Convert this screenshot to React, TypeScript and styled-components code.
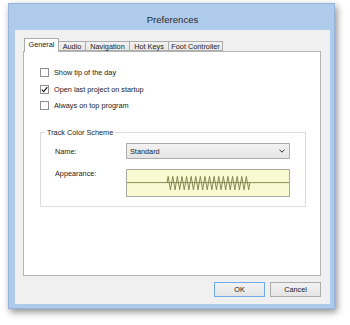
import React from "react";
import styled, { createGlobalStyle } from "styled-components";

const Global = createGlobalStyle`
  html, body { margin: 0; padding: 0; background: #ffffff; }
  body { font-family: "Liberation Sans", Arial, sans-serif; }
  #root { width: 350px; height: 325px; overflow: hidden; }
`;

const Window = styled.div`
  box-sizing: border-box;
  width: 327px;
  height: 306px;
  margin: 3px 0 0 8px;
  padding: 0 4px 4px 6px;
  background: #aecbec;
  border: 1px solid #97b5dc;
  box-shadow: 2px 3px 7px rgba(0, 0, 0, 0.45);
  display: flex;
  flex-direction: column;
`;

const TitleBar = styled.div`
  height: 26px;
  display: flex;
  align-items: center;
  justify-content: center;
  padding-top: 4px;
  box-sizing: border-box;
  font-size: 9.6px;
  color: #2c2c2c;
`;

const Client = styled.div`
  flex: 1;
  background: #f0f0f0;
  padding: 8px 9px 0 8px;
  display: flex;
  flex-direction: column;
`;

const TabStrip = styled.div`
  height: 13px;
  display: flex;
  align-items: flex-end;
  padding-left: 1px;
  position: relative;
  z-index: 1;
`;

const Tab = styled.div<{ $w: number; $active?: boolean }>`
  box-sizing: border-box;
  width: ${(p) => p.$w}px;
  height: ${(p) => (p.$active ? 14 : 10)}px;
  margin-bottom: ${(p) => (p.$active ? -1 : 0)}px;
  margin-left: -1px;
  &:first-child { margin-left: 0; }
  border: 1px solid #acacac;
  border-bottom: ${(p) => (p.$active ? "none" : "1px solid #acacac")};
  background: ${(p) => (p.$active ? "#ffffff" : "linear-gradient(#f2f2f2, #e6e6e6)")};
  font-size: 7.3px;
  color: #1a1a1a;
  display: flex;
  align-items: center;
  justify-content: center;
  padding-bottom: ${(p) => (p.$active ? 3 : 0)}px;
  white-space: nowrap;
`;

const Panel = styled.div`
  box-sizing: border-box;
  width: 298px;
  height: 225px;
  background: #ffffff;
  border: 1px solid #b4b4b4;
  padding: 16px 14px 0 16px;
  display: flex;
  flex-direction: column;
`;

const CheckList = styled.div`
  display: flex;
  flex-direction: column;
  gap: 7.5px;
`;

const CheckRow = styled.div`
  height: 9px;
  display: flex;
  align-items: center;
  gap: 5px;
  font-size: 7.3px;
  color: #1a1a1a;
  white-space: nowrap;
`;

const Box = styled.div`
  box-sizing: border-box;
  width: 9px;
  height: 9px;
  border: 1px solid #8f8f8f;
  background: #ffffff;
  display: flex;
  align-items: center;
  justify-content: center;
`;

const Group = styled.div`
  box-sizing: border-box;
  position: relative;
  margin-top: 22px;
  width: 266px;
  height: 75px;
  border: 1px solid #dcdcdc;
  padding: 10px 15px 9px 14px;
  display: flex;
  flex-direction: column;
  gap: 10px;
`;

const GroupLabel = styled.span`
  position: absolute;
  top: -5px;
  left: 4px;
  padding: 0 2px;
  background: #ffffff;
  font-size: 7.3px;
  line-height: 9px;
  color: #1a1a1a;
  white-space: nowrap;
`;

const FieldRow = styled.div<{ $h: number }>`
  display: grid;
  grid-template-columns: 71px 164px;
  height: ${(p) => p.$h}px;
  align-items: ${(p) => (p.$h > 20 ? "start" : "center")};
`;

const FieldLabel = styled.span`
  font-size: 7.3px;
  line-height: 9px;
  color: #1a1a1a;
`;

const Select = styled.div`
  box-sizing: border-box;
  height: 16px;
  border: 1px solid #acacac;
  background: linear-gradient(#f2f2f2, #e5e5e5);
  display: flex;
  align-items: center;
  justify-content: space-between;
  padding: 0 4px 0 3px;
  font-size: 7.3px;
  color: #1a1a1a;
`;

const Appearance = styled.div`
  box-sizing: border-box;
  height: 28px;
  border: 1px solid #a9a9a0;
  background: #fafad2;
  display: flex;
`;

const ButtonRow = styled.div`
  margin-top: 6px;
  display: flex;
  justify-content: flex-end;
  gap: 5px;
`;

const Button = styled.div<{ $default?: boolean }>`
  box-sizing: border-box;
  width: 51px;
  height: 15px;
  border: 1px solid ${(p) => (p.$default ? "#6fa9e6" : "#acacac")};
  background: linear-gradient(#f2f2f2, #e4e4e4);
  display: flex;
  align-items: center;
  justify-content: center;
  font-size: 7.3px;
  color: #1a1a1a;
`;

const Check = () => (
  <svg width="7" height="7" viewBox="0 0 7 7">
    <path d="M0.8 3.6 L2.7 5.6 L6.3 1.2" fill="none" stroke="#222" strokeWidth="1.3" />
  </svg>
);

const Chevron = () => (
  <svg width="6" height="4" viewBox="0 0 6 4">
    <path d="M0.5 0.6 L3 3.2 L5.5 0.6" fill="none" stroke="#333" strokeWidth="1" />
  </svg>
);

const Wave = () => {
  const pts: string[] = [];
  const x0 = 40;
  const period = 4.6;
  const n = 18;
  pts.push(`${x0},13`);
  for (let i = 0; i < n; i++) {
    const x = x0 + i * period;
    pts.push(`${(x + period * 0.25).toFixed(2)},6.4`);
    pts.push(`${(x + period * 0.75).toFixed(2)},19.8`);
  }
  pts.push(`${(x0 + n * period).toFixed(2)},13`);
  return (
    <svg width="162" height="26" viewBox="0 0 162 26">
      <line x1="0" y1="12.6" x2="162" y2="12.6" stroke="#8a8a55" strokeWidth="1" />
      <polyline points={pts.join(" ")} fill="none" stroke="#7c7c48" strokeWidth="0.9" />
    </svg>
  );
};

const tabs = [
  { label: "General", w: 35, active: true },
  { label: "Audio", w: 28 },
  { label: "Navigation", w: 45 },
  { label: "Hot Keys", w: 40 },
  { label: "Foot Controller", w: 55 },
];

export default function App() {
  return (
    <>
      <Global />
      <Window>
        <TitleBar>Preferences</TitleBar>
        <Client>
          <TabStrip>
            {tabs.map((t) => (
              <Tab key={t.label} $w={t.w} $active={t.active}>
                {t.label}
              </Tab>
            ))}
          </TabStrip>
          <Panel>
            <CheckList>
              <CheckRow>
                <Box />
                Show tip of the day
              </CheckRow>
              <CheckRow>
                <Box>
                  <Check />
                </Box>
                Open last project on startup
              </CheckRow>
              <CheckRow>
                <Box />
                Always on top program
              </CheckRow>
            </CheckList>
            <Group>
              <GroupLabel>Track Color Scheme</GroupLabel>
              <FieldRow $h={16}>
                <FieldLabel>Name:</FieldLabel>
                <Select>
                  Standard
                  <Chevron />
                </Select>
              </FieldRow>
              <FieldRow $h={28}>
                <FieldLabel>Appearance:</FieldLabel>
                <Appearance>
                  <Wave />
                </Appearance>
              </FieldRow>
            </Group>
          </Panel>
          <ButtonRow>
            <Button $default>OK</Button>
            <Button>Cancel</Button>
          </ButtonRow>
        </Client>
      </Window>
    </>
  );
}
